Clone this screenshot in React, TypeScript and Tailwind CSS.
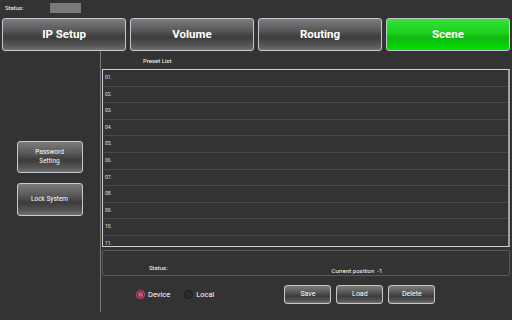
import React from 'react';

const tabs = ['IP Setup', 'Volume', 'Routing', 'Scene'];
const presets = ['01.', '02.', '03.', '04.', '05.', '06.', '07.', '08.', '09.', '10.', '11.'];

const grayBtn =
  'rounded-[3px] border border-[#c4c8d4] bg-[linear-gradient(to_bottom,#7c7c7c_0%,#5a5a5a_35%,#3c3c3c_60%,#555555_85%,#707070_100%)] text-white';

function SmallButton({ label }: { label: string }) {
  return (
    <button className={`${grayBtn} w-[47px] h-[19px] flex items-center justify-center text-[7px]`}>
      {label}
    </button>
  );
}

export default function App() {
  return (
    <div className="w-[512px] h-[320px] bg-[#333333] overflow-hidden font-['Roboto',sans-serif] text-white">
      {/* Status bar */}
      <div className="h-[18px] flex items-start pt-[3px] pl-[5px]">
        <span className="text-[6px] leading-[10px] w-[45px]">Status:</span>
        <div className="w-[31px] h-[10px] bg-[#7a7a7a]" />
      </div>

      {/* Tabs */}
      <div className="flex gap-[4px] px-[2px] h-[33px]">
        {tabs.map((t) => (
          <button
            key={t}
            className={
              t === 'Scene'
                ? 'flex-1 rounded-[3px] border border-[#c4c8d4] bg-[linear-gradient(to_bottom,#36e236_0%,#1cd01c_45%,#10b810_60%,#06d006_85%,#00e400_100%)] text-[11.5px] font-bold text-white'
                : `flex-1 ${grayBtn} text-[11.5px] font-bold`
            }
          >
            {t}
          </button>
        ))}
      </div>

      {/* Main */}
      <div className="flex h-[261px]">
        <div className="w-[101px] border-r border-[#7a7a7a] flex flex-col items-center pt-[90px] gap-[10px] pr-[1px]">
          <button className={`${grayBtn} w-[66px] h-[32px] text-[6.5px] leading-[9px] flex items-center justify-center`}>
            Password<br />Setting
          </button>
          <button className={`${grayBtn} w-[66px] h-[33px] text-[6.5px] flex items-center justify-center`}>
            Lock System
          </button>
        </div>

        <div className="flex-1 flex flex-col pl-[1px] pr-[2px]">
          <div className="h-[18px] flex items-center pl-[41px] text-[6px]">Preset List</div>
          <div className="h-[178px] border-t border-l border-b border-[#d0d0d0] border-r-2 border-r-[#a0a0a0] overflow-hidden">
            {presets.map((p) => (
              <div
                key={p}
                className="h-[16.6px] border-b border-[#4a4a4a] flex items-center pl-[2px] text-[5px] text-[#e0e0e0]"
              >
                {p}
              </div>
            ))}
          </div>
          <div className="mt-[3px] h-[26px] border border-[#595959] rounded-[2px] flex items-end pb-[3px] text-[6px]">
            <span className="ml-[46px]">Status:</span>
            <span className="ml-[164px] mb-[-3px]">Current position&nbsp;&nbsp;-1</span>
          </div>
          <div className="flex items-center mt-[9px] h-[19px]">
            <div className="flex items-center ml-[34px] gap-[3px]">
              <span className="w-[9px] h-[9px] rounded-full border border-[#e04a7a] flex items-center justify-center">
                <span className="w-[5px] h-[5px] rounded-full bg-[#e04a7a]" />
              </span>
              <span className="text-[7.5px]">Device</span>
            </div>
            <div className="flex items-center ml-[14px] gap-[3px]">
              <span className="w-[9px] h-[9px] rounded-full border border-[#1a1a1a] bg-[#2a2a2a]" />
              <span className="text-[7.5px]">Local</span>
            </div>
            <div className="flex items-center gap-[5px] ml-[70px]">
              <SmallButton label="Save" />
              <SmallButton label="Load" />
              <SmallButton label="Delete" />
            </div>
          </div>
        </div>
      </div>
    </div>
  );
}
